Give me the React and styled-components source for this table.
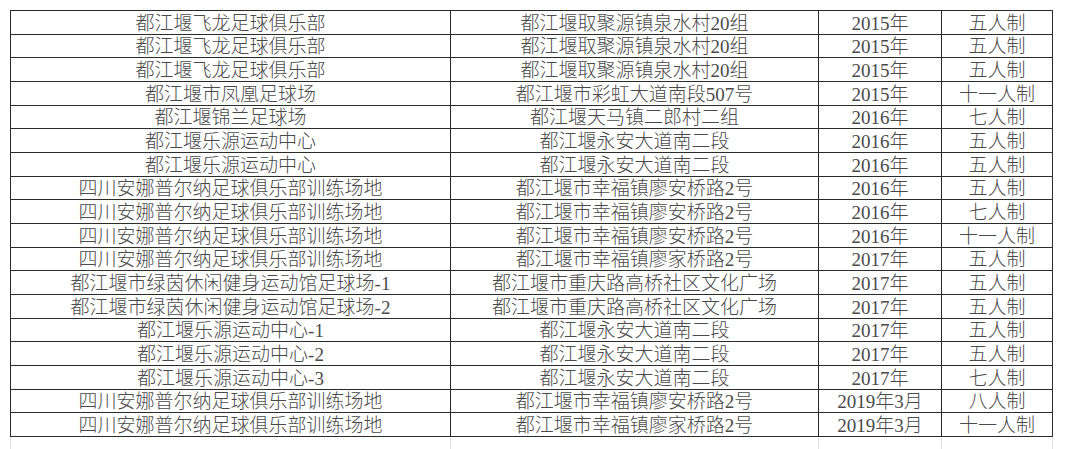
import React from "react";
import styled, { createGlobalStyle } from "styled-components";

const GlobalStyle = createGlobalStyle`
  html, body {
    margin: 0;
    padding: 0;
    background: #fff;
  }
`;

const Page = styled.div`
  width: 1080px;
  height: 449px;
  overflow: hidden;
  background: #fff;
  padding: 10px 0 0 10px;
  box-sizing: border-box;
`;

const Sheet = styled.div`
  display: grid;
  grid-template-columns: 440px 368px 123px 111px;
  grid-auto-rows: 23.67px;
  width: max-content;
  border-top: 1px solid #2b2b2b;
  border-left: 1px solid #2b2b2b;
`;

const Cell = styled.div`
  display: flex;
  align-items: flex-end;
  justify-content: center;
  border-right: 1px solid #2b2b2b;
  border-bottom: 1px solid #2b2b2b;
  font-family: "Liberation Serif", "Noto Sans CJK SC", serif;
  font-weight: 300;
  font-size: 19px;
  line-height: 20px;
  color: #4a4a4a;
  white-space: nowrap;
  overflow: hidden;
`;

const GhostRow = styled.div`
  display: grid;
  grid-template-columns: 440px 368px 123px 111px;
  height: 14px;
  width: max-content;
  border-left: 1px solid #e4e4e4;
`;

const GhostCell = styled.div`
  border-right: 1px solid #e4e4e4;
`;

const rows = [
  ["都江堰飞龙足球俱乐部", "都江堰取聚源镇泉水村20组", "2015年", "五人制"],
  ["都江堰飞龙足球俱乐部", "都江堰取聚源镇泉水村20组", "2015年", "五人制"],
  ["都江堰飞龙足球俱乐部", "都江堰取聚源镇泉水村20组", "2015年", "五人制"],
  ["都江堰市凤凰足球场", "都江堰市彩虹大道南段507号", "2015年", "十一人制"],
  ["都江堰锦兰足球场", "都江堰天马镇二郎村二组", "2016年", "七人制"],
  ["都江堰乐源运动中心", "都江堰永安大道南二段", "2016年", "五人制"],
  ["都江堰乐源运动中心", "都江堰永安大道南二段", "2016年", "五人制"],
  ["四川安娜普尔纳足球俱乐部训练场地", "都江堰市幸福镇廖安桥路2号", "2016年", "五人制"],
  ["四川安娜普尔纳足球俱乐部训练场地", "都江堰市幸福镇廖安桥路2号", "2016年", "七人制"],
  ["四川安娜普尔纳足球俱乐部训练场地", "都江堰市幸福镇廖安桥路2号", "2016年", "十一人制"],
  ["四川安娜普尔纳足球俱乐部训练场地", "都江堰市幸福镇廖家桥路2号", "2017年", "五人制"],
  ["都江堰市绿茵休闲健身运动馆足球场-1", "都江堰市重庆路高桥社区文化广场", "2017年", "五人制"],
  ["都江堰市绿茵休闲健身运动馆足球场-2", "都江堰市重庆路高桥社区文化广场", "2017年", "五人制"],
  ["都江堰乐源运动中心-1", "都江堰永安大道南二段", "2017年", "五人制"],
  ["都江堰乐源运动中心-2", "都江堰永安大道南二段", "2017年", "五人制"],
  ["都江堰乐源运动中心-3", "都江堰永安大道南二段", "2017年", "七人制"],
  ["四川安娜普尔纳足球俱乐部训练场地", "都江堰市幸福镇廖安桥路2号", "2019年3月", "八人制"],
  ["四川安娜普尔纳足球俱乐部训练场地", "都江堰市幸福镇廖家桥路2号", "2019年3月", "十一人制"],
];

export default function App() {
  return (
    <Page>
      <GlobalStyle />
      <Sheet>
        {rows.map((row, i) =>
          row.map((valor, j) => <Cell key={`${i}-${j}`}>{valor}</Cell>)
        )}
      </Sheet>
      <GhostRow>
        <GhostCell />
        <GhostCell />
        <GhostCell />
        <GhostCell />
      </GhostRow>
    </Page>
  );
}
